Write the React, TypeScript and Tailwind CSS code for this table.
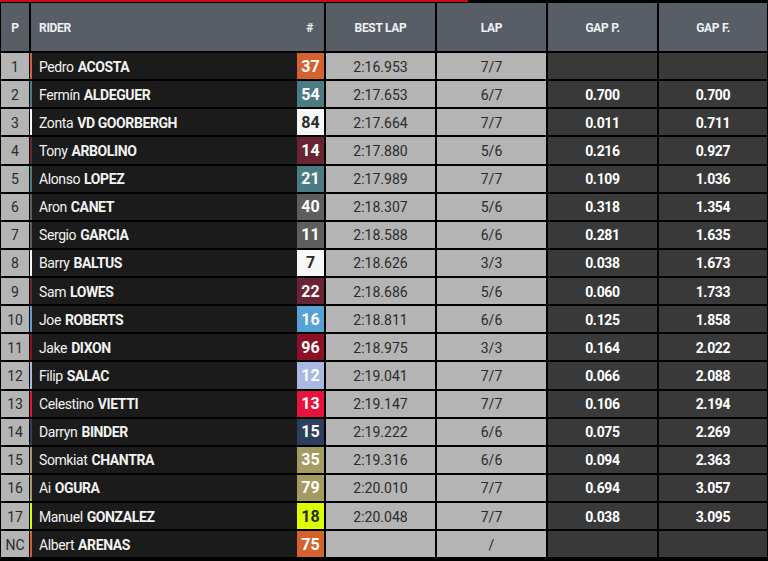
import React from 'react';

type Row = {
  pos: string;
  first: string;
  last: string;
  num: string;
  color: string;
  dark?: boolean;
  best: string;
  lap: string;
  gapP: string;
  gapF: string;
};

const rows: Row[] = [
  { pos: '1', first: 'Pedro', last: 'ACOSTA', num: '37', color: '#d4622f', best: '2:16.953', lap: '7/7', gapP: '', gapF: '' },
  { pos: '2', first: 'Fermín', last: 'ALDEGUER', num: '54', color: '#4b7c84', best: '2:17.653', lap: '6/7', gapP: '0.700', gapF: '0.700' },
  { pos: '3', first: 'Zonta', last: 'VD GOORBERGH', num: '84', color: '#f7f7f7', dark: true, best: '2:17.664', lap: '7/7', gapP: '0.011', gapF: '0.711' },
  { pos: '4', first: 'Tony', last: 'ARBOLINO', num: '14', color: '#6a2434', best: '2:17.880', lap: '5/6', gapP: '0.216', gapF: '0.927' },
  { pos: '5', first: 'Alonso', last: 'LOPEZ', num: '21', color: '#4b7c84', best: '2:17.989', lap: '7/7', gapP: '0.109', gapF: '1.036' },
  { pos: '6', first: 'Aron', last: 'CANET', num: '40', color: '#5e5e5e', best: '2:18.307', lap: '5/6', gapP: '0.318', gapF: '1.354' },
  { pos: '7', first: 'Sergio', last: 'GARCIA', num: '11', color: '#5e5e5e', best: '2:18.588', lap: '6/6', gapP: '0.281', gapF: '1.635' },
  { pos: '8', first: 'Barry', last: 'BALTUS', num: '7', color: '#f7f7f7', dark: true, best: '2:18.626', lap: '3/3', gapP: '0.038', gapF: '1.673' },
  { pos: '9', first: 'Sam', last: 'LOWES', num: '22', color: '#6a2434', best: '2:18.686', lap: '5/6', gapP: '0.060', gapF: '1.733' },
  { pos: '10', first: 'Joe', last: 'ROBERTS', num: '16', color: '#56a2d8', best: '2:18.811', lap: '6/6', gapP: '0.125', gapF: '1.858' },
  { pos: '11', first: 'Jake', last: 'DIXON', num: '96', color: '#8e1026', best: '2:18.975', lap: '3/3', gapP: '0.164', gapF: '2.022' },
  { pos: '12', first: 'Filip', last: 'SALAC', num: '12', color: '#a9b9e2', best: '2:19.041', lap: '7/7', gapP: '0.066', gapF: '2.088' },
  { pos: '13', first: 'Celestino', last: 'VIETTI', num: '13', color: '#e6143b', best: '2:19.147', lap: '7/7', gapP: '0.106', gapF: '2.194' },
  { pos: '14', first: 'Darryn', last: 'BINDER', num: '15', color: '#2e3f5e', best: '2:19.222', lap: '6/6', gapP: '0.075', gapF: '2.269' },
  { pos: '15', first: 'Somkiat', last: 'CHANTRA', num: '35', color: '#a49b63', best: '2:19.316', lap: '6/6', gapP: '0.094', gapF: '2.363' },
  { pos: '16', first: 'Ai', last: 'OGURA', num: '79', color: '#a49b63', best: '2:20.010', lap: '7/7', gapP: '0.694', gapF: '3.057' },
  { pos: '17', first: 'Manuel', last: 'GONZALEZ', num: '18', color: '#dcff00', dark: true, best: '2:20.048', lap: '7/7', gapP: '0.038', gapF: '3.095' },
  { pos: 'NC', first: 'Albert', last: 'ARENAS', num: '75', color: '#d4622f', best: '', lap: '/', gapP: '', gapF: '' },
];

const cols = 'grid grid-cols-[28px_293px_109px_109px_109px_108px] gap-x-[2px]';

export default function App() {
  return (
    <div className="w-[768px] h-[561px] bg-black overflow-hidden" style={{ fontFamily: 'Roboto, "Noto Sans", sans-serif' }}>
      {/* top progress bar */}
      <div className="h-[2px] w-[468px] bg-[#c8100f]" />
      <div className="pl-px pt-px">
        {/* header */}
        <div className={`${cols} h-[48px] text-[12px] tracking-[-0.3px] font-bold text-[#eef1f4]`}>
          <div className="bg-[#575e66] flex items-center justify-center pt-px">P</div>
          <div className="bg-[#575e66] flex items-center justify-between pl-[8px] pr-[11px] pt-px">
            <span>RIDER</span>
            <span>#</span>
          </div>
          <div className="bg-[#575e66] flex items-center justify-center pt-px">BEST LAP</div>
          <div className="bg-[#575e66] flex items-center justify-center pt-px">LAP</div>
          <div className="bg-[#575e66] flex items-center justify-center pt-px">GAP P.</div>
          <div className="bg-[#575e66] flex items-center justify-center pt-px">GAP F.</div>
        </div>

        <div className="flex flex-col gap-y-[2px] mt-[2px]">
          {rows.map(r => (
            <div key={r.pos} className={`${cols} h-[26.125px] text-[14px]`}>
              <div className="bg-[#b4b4b4] text-[#2b2b2b] flex items-center justify-center pt-[2px]">{r.pos}</div>
              <div className="-ml-px bg-[#1b1b1b] flex items-stretch">
                <div className="w-[2px]" style={{ backgroundColor: r.color }} />
                <div className="flex-1 flex items-center pl-[7px] pt-[2px] text-[#f2f2f2] tracking-[-0.4px]">
                  <span>{r.first}</span>
                  <span className="font-bold ml-[4px]">{r.last}</span>
                </div>
                <div
                  className={`w-[27px] flex items-center justify-center pt-px font-bold text-[16px] ${r.dark ? 'text-[#2b2b2b]' : 'text-white'}`}
                  style={{ backgroundColor: r.color }}
                >
                  {r.num}
                </div>
              </div>
              <div className="bg-[#b4b4b4] text-[#2b2b2b] flex items-center justify-center pt-[2px]">{r.best}</div>
              <div className="bg-[#b4b4b4] text-[#2b2b2b] flex items-center justify-center pt-[2px]">{r.lap}</div>
              <div className="bg-[#393939] text-white font-bold tracking-[-0.3px] flex items-center justify-center pt-[2px]">{r.gapP}</div>
              <div className="bg-[#393939] text-white font-bold tracking-[-0.3px] flex items-center justify-center pt-[2px]">{r.gapF}</div>
            </div>
          ))}
        </div>
      </div>
    </div>
  );
}
